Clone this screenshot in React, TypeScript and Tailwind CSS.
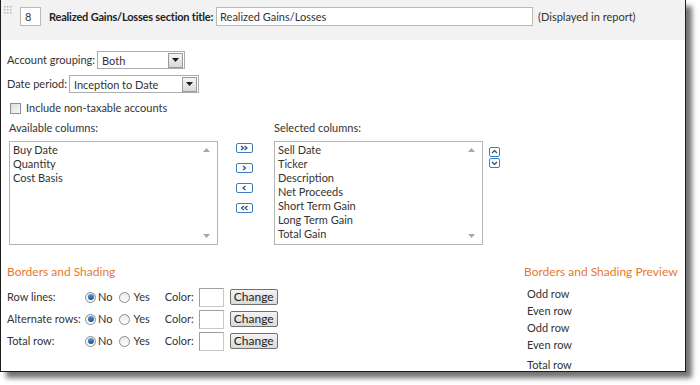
import React from "react";

const availableColumns = ["Buy Date", "Quantity", "Cost Basis"];
const selectedColumns = [
  "Sell Date",
  "Ticker",
  "Description",
  "Net Proceeds",
  "Short Term Gain",
  "Long Term Gain",
  "Total Gain",
];
const shadingRows = ["Row lines:", "Alternate rows:", "Total row:"];
const previewRows = ["Odd row", "Even row", "Odd row", "Even row"];

const Select = ({ value, width }: { value: string; width: string }) => (
  <div
    className={`${width} h-[18px] flex items-center justify-between border border-[#acacac] bg-white`}
  >
    <span className="pl-[4px] leading-none">{value}</span>
    <span className="w-[15px] h-[15px] mr-[1px] flex items-center justify-center border border-[#9a9a9a] bg-gradient-to-b from-[#f4f4f4] to-[#d9d9d9]">
      <svg width="7" height="4" viewBox="0 0 7 4">
        <path d="M0 0H7L3.5 4Z" fill="#1a1a1a" />
      </svg>
    </span>
  </div>
);

const ArrowButton = ({ kind }: { kind: "right2" | "right" | "left" | "left2" | "up" | "down" }) => {
  const paths: Record<string, string> = {
    right2: "M5 3L7.5 5L5 7M8.5 3L11 5L8.5 7",
    right: "M7 3L9.5 5L7 7",
    left: "M9.5 3L7 5L9.5 7",
    left2: "M8 3L5.5 5L8 7M11.5 3L9 5L11.5 7",
    up: "M3 6L5.5 3.5L8 6",
    down: "M3 4L5.5 6.5L8 4",
  };
  const small = kind === "up" || kind === "down";
  return (
    <svg width={small ? 11 : 17} height="10" viewBox={small ? "0 0 11 10" : "0 0 17 10"}>
      <rect
        x="0.5"
        y="0.5"
        width={small ? 10 : 16}
        height="9"
        rx="1.5"
        fill="#fff"
        stroke="#3f7fc0"
      />
      <path d={paths[kind]} fill="none" stroke="#1d4f8a" strokeWidth="1.2" />
    </svg>
  );
};

const ListBox = ({ items }: { items: string[] }) => (
  <div className="relative w-[209px] h-[104px] border border-[#b5b5b5] bg-white pt-[1px] pl-[3px]">
    {items.map((item, i) => (
      <div key={i} className="h-[14px] leading-[14px]">
        {item}
      </div>
    ))}
    <svg className="absolute right-[7px] top-[6px]" width="7" height="4" viewBox="0 0 7 4">
      <path d="M0 4H7L3.5 0Z" fill="#a8a8a8" />
    </svg>
    <svg className="absolute right-[7px] bottom-[6px]" width="7" height="4" viewBox="0 0 7 4">
      <path d="M0 0H7L3.5 4Z" fill="#a8a8a8" />
    </svg>
  </div>
);

const Radio = ({ checked }: { checked: boolean }) => (
  <span className="w-[11px] h-[11px] rounded-full border border-[#8c8c8c] bg-gradient-to-b from-[#e9e9e9] to-[#ffffff] flex items-center justify-center">
    {checked && (
      <span className="w-[6px] h-[6px] rounded-full bg-gradient-to-b from-[#5aa0e0] to-[#0d4f95]" />
    )}
  </span>
);

export default function App() {
  return (
    <div className="w-[700px] h-[385px] bg-white text-[11px] text-[#333] font-['Lato','Liberation_Sans',sans-serif] overflow-hidden">
      <div className="w-[686px] h-[372px] border-x border-b border-[#1c1c1c] shadow-[6px_6px_5px_rgba(0,0,0,0.55)] bg-white">
        {/* section header */}
        <div className="h-[40px] bg-[#f2f2f2] flex items-start pt-[7px] pl-[3px]">
          <svg width="8" height="9" viewBox="0 0 8 9" className="mt-[-1px]">
            {[0, 3, 6].map((y) =>
              [0, 3, 6].map((x) => (
                <rect key={`${x}-${y}`} x={x} y={y} width="1.5" height="1.5" fill="#b4b4b4" />
              ))
            )}
          </svg>
          <div className="ml-[8px] w-[21px] h-[19px] border border-[#b8b8b8] bg-white pl-[4px] leading-[17px]">
            8
          </div>
          <div className="ml-[8px] h-[19px] leading-[19px] font-bold text-[#222] tracking-[-0.2px] whitespace-nowrap">
            Realized Gains/Losses section title:
          </div>
          <div className="ml-[3px] w-[317px] h-[19px] border border-[#b8b8b8] bg-white pl-[3px] leading-[17px]">
            Realized Gains/Losses
          </div>
          <div className="ml-[5px] h-[19px] leading-[19px] whitespace-nowrap">(Displayed in report)</div>
        </div>

        {/* body */}
        <div className="pl-[6px]">
          <div className="mt-[11px] flex items-center gap-[2px]">
            <span>Account grouping:</span>
            <Select value="Both" width="w-[88px]" />
          </div>
          <div className="mt-[6px] flex items-center gap-[2px]">
            <span>Date period:</span>
            <Select value="Inception to Date" width="w-[130px]" />
          </div>
          <div className="mt-[8px] ml-[3px] h-[14px] flex items-center gap-[5px]">
            <span className="w-[11px] h-[11px] border border-[#8f8f8f] bg-gradient-to-br from-[#dcdcdc] to-[#fafafa]" />
            <span>Include non-taxable accounts</span>
          </div>

          <div className="mt-[6px] ml-[2px] flex items-start">
            <div>
              <div className="h-[14px] leading-[14px]">Available columns:</div>
              <div className="mt-[6px]">
                <ListBox items={availableColumns} />
              </div>
            </div>
            <div className="ml-[18px] mt-[22px] flex flex-col gap-[10px]">
              <ArrowButton kind="right2" />
              <ArrowButton kind="right" />
              <ArrowButton kind="left" />
              <ArrowButton kind="left2" />
            </div>
            <div className="ml-[21px]">
              <div className="h-[14px] leading-[14px]">Selected columns:</div>
              <div className="mt-[6px]">
                <ListBox items={selectedColumns} />
              </div>
            </div>
            <div className="ml-[6px] mt-[26px] flex flex-col gap-[1px]">
              <ArrowButton kind="up" />
              <ArrowButton kind="down" />
            </div>
          </div>

          {/* borders and shading */}
          <div className="mt-[19px] flex items-start">
            <div className="w-[517px]">
              <div className="h-[16px] leading-[16px] text-[12px] text-[#e8772e] whitespace-nowrap">
                Borders and Shading
              </div>
              <div className="mt-[6px]">
                {shadingRows.map((label) => (
                  <div key={label} className="h-[22px] flex items-center">
                    <span className="w-[78px]">{label}</span>
                    <Radio checked />
                    <span className="ml-[2px]">No</span>
                    <span className="ml-[7px]">
                      <Radio checked={false} />
                    </span>
                    <span className="ml-[3px]">Yes</span>
                    <span className="ml-[15px]">Color:</span>
                    <span className="ml-[5px] w-[25px] h-[19px] border border-[#c8c8c8] border-t-[#a0a0a0] border-l-[#a0a0a0] bg-white" />
                    <span className="ml-[6px] w-[48px] h-[16px] leading-[14px] text-center rounded-[2px] border border-[#707070] bg-gradient-to-b from-[#f3f3f3] to-[#dadada] text-[12px] text-[#222]">
                      Change
                    </span>
                  </div>
                ))}
              </div>
            </div>
            <div className="whitespace-nowrap">
              <div className="h-[16px] leading-[16px] text-[12px] text-[#e8772e]">
                Borders and Shading Preview
              </div>
              <div className="mt-[5px] pl-[3px]">
                {previewRows.map((row, i) => (
                  <div key={i} className="h-[17px] leading-[17px]">
                    {row}
                  </div>
                ))}
                <div className="mt-[3px] h-[17px] leading-[17px]">Total row</div>
              </div>
            </div>
          </div>
        </div>
      </div>
    </div>
  );
}
